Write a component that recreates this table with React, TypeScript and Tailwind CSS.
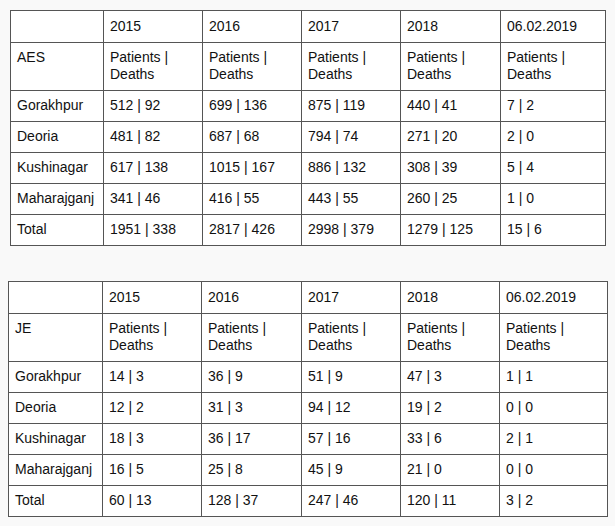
const years = ["2015", "2016", "2017", "2018", "06.02.2019"];

const aes = [
  ["Gorakhpur", "512 | 92", "699 | 136", "875 | 119", "440 | 41", "7 | 2"],
  ["Deoria", "481 | 82", "687 | 68", "794 | 74", "271 | 20", "2 | 0"],
  ["Kushinagar", "617 | 138", "1015 | 167", "886 | 132", "308 | 39", "5 | 4"],
  ["Maharajganj", "341 | 46", "416 | 55", "443 | 55", "260 | 25", "1 | 0"],
  ["Total", "1951 | 338", "2817 | 426", "2998 | 379", "1279 | 125", "15 | 6"],
];

const je = [
  ["Gorakhpur", "14 | 3", "36 | 9", "51 | 9", "47 | 3", "1 | 1"],
  ["Deoria", "12 | 2", "31 | 3", "94 | 12", "19 | 2", "0 | 0"],
  ["Kushinagar", "18 | 3", "36 | 17", "57 | 16", "33 | 6", "2 | 1"],
  ["Maharajganj", "16 | 5", "25 | 8", "45 | 9", "21 | 0", "0 | 0"],
  ["Total", "60 | 13", "128 | 37", "247 | 46", "120 | 11", "3 | 2"],
];

const cell = "border border-[#555] px-[6px] pb-[7px] align-top text-left font-normal";

function CaseTable({ label, rows, widths }: { label: string; rows: string[][]; widths: number[] }) {
  return (
    <table className="border-collapse bg-white table-fixed">
      <colgroup>
        {widths.map((w, i) => (
          <col key={i} style={{ width: w }} />
        ))}
      </colgroup>
      <tbody>
        <tr>
          <td className={`${cell} pt-[7px]`}>&nbsp;</td>
          {years.map((y) => (
            <td key={y} className={`${cell} pt-[7px]`}>{y}</td>
          ))}
        </tr>
        <tr>
          <td className={`${cell} pt-[6px]`}>{label}</td>
          {years.map((y) => (
            <td key={y} className={`${cell} pt-[6px]`}>
              Patients |<br />Deaths
            </td>
          ))}
        </tr>
        {rows.map((r) => (
          <tr key={r[0]}>
            {r.map((v, i) => (
              <td key={i} className={`${cell} pt-[6px]`}>{v}</td>
            ))}
          </tr>
        ))}
      </tbody>
    </table>
  );
}

export default function App() {
  return (
    <div className="h-[526px] w-[615px] bg-[#f9f9f9] pt-[10px] text-[14px] leading-[17px] text-[#111] font-[family-name:Liberation_Sans,Arial,sans-serif]">
      <div className="ml-[10px]">
        <CaseTable label="AES" rows={aes} widths={[93, 99, 99, 99, 100, 105]} />
      </div>
      <div className="ml-[8px] mt-[35px]">
        <CaseTable label="JE" rows={je} widths={[94, 99, 100, 99, 99, 108]} />
      </div>
    </div>
  );
}
